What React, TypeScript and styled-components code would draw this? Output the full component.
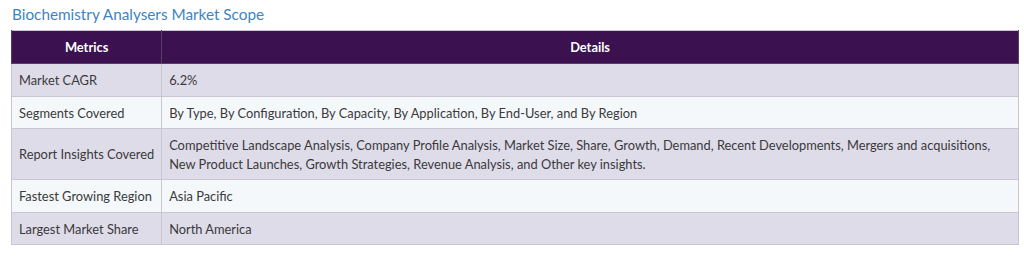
import React from 'react';
import styled, {createGlobalStyle} from 'styled-components';

type Row = {
    metric: string;
    details: string;
};

const rows: Row[] = [
    {metric: 'Market CAGR', details: '6.2%'},
    {
        metric: 'Segments Covered',
        details: 'By Type, By Configuration, By Capacity, By Application, By End-User, and By Region',
    },
    {
        metric: 'Report Insights Covered',
        details: 'Competitive Landscape Analysis, Company Profile Analysis, Market Size, Share, Growth, Demand, Recent Developments, Mergers and acquisitions, New Product Launches, Growth Strategies, Revenue Analysis, and Other key insights.',
    },
    {metric: 'Fastest Growing Region', details: 'Asia Pacific'},
    {metric: 'Largest Market Share', details: 'North America'},
];

const App = () => (
    <>
        <GlobalStyle/>
        <Page>
            <Title>Biochemistry Analysers Market Scope</Title>
            <Table>
                <thead>
                    <tr>
                        <HeadCell $width={150}>Metrics</HeadCell>
                        <HeadCell>Details</HeadCell>
                    </tr>
                </thead>
                <tbody>
                    {rows.map((row, i) => (
                        <BodyRow key={row.metric} $striped={i % 2 === 0}>
                            <MetricCell>{row.metric}</MetricCell>
                            <Cell>{row.details}</Cell>
                        </BodyRow>
                    ))}
                </tbody>
            </Table>
        </Page>
    </>
);

export default App;

const GlobalStyle = createGlobalStyle`
    html, body {
        margin: 0;
        padding: 0;
        background: #ffffff;
    }
`;

const Page = styled.div`
    padding: 4px 6px 0 11px;
    font-family: Lato, "Open Sans", sans-serif;
`;

const Title = styled.h2`
    margin: 0 0 6px 1px;
    font-size: 15.3px;
    font-weight: 400;
    line-height: 20px;
    color: #3f84bf;
`;

const Table = styled.table`
    width: 1008px;
    border-collapse: collapse;
    border: 1px solid #c9c6d2;
    font-size: 12.85px;
    color: #3a3a3a;
`;

const HeadCell = styled.th<{$width?: number}>`
    ${(p) => (p.$width ? `width: ${p.$width}px;` : '')}
    height: 33px;
    padding: 0 8px;
    box-sizing: border-box;
    background: #3b1150;
    color: #ffffff;
    font-weight: 700;
    text-align: center;
    border: 1px solid #5a3d6b;
    border-top: none;
`;

const BodyRow = styled.tr<{$striped: boolean}>`
    background: ${(p) => (p.$striped ? '#dfdcea' : '#f4f8fb')};
`;

const Cell = styled.td`
    padding: 7px 7px 6px 7px;
    line-height: 18.5px;
    border: 1px solid #c9c6d2;
    vertical-align: middle;
    text-align: left;
`;

const MetricCell = styled(Cell)`
    white-space: nowrap;
`;
